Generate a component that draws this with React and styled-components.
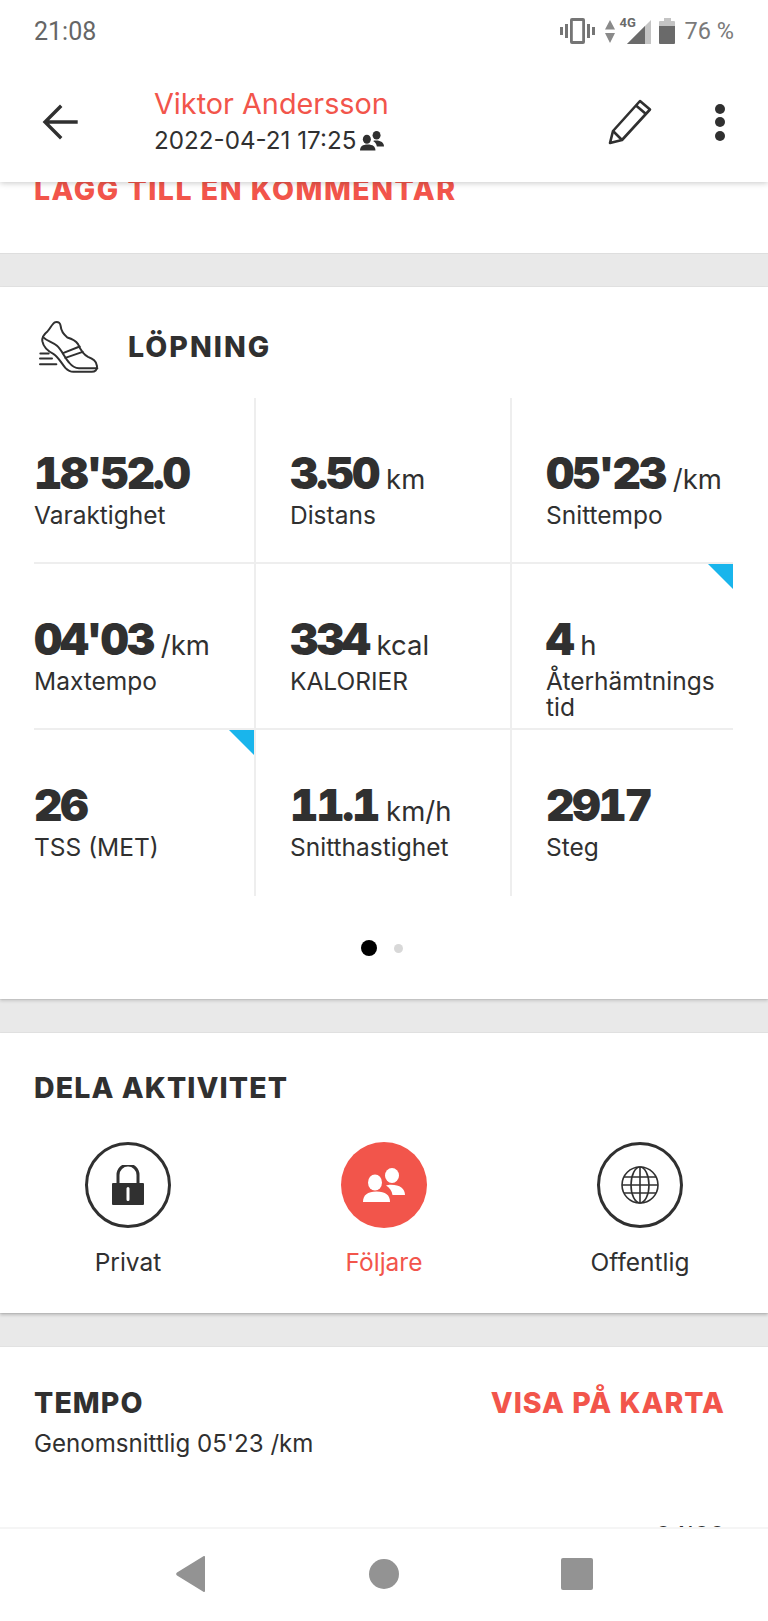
import styled, { createGlobalStyle, css } from "styled-components";

const RED = "#f2554b";
const INK = "#303030";
const LINE = "#eeeeee";

const GlobalStyle = createGlobalStyle`
  html, body { margin: 0; padding: 0; background: #fff; }
  * { box-sizing: border-box; }
`;

const metrics = [
  { value: "18'52.0", label: "Varaktighet" },
  { value: "3.50", unit: "km", label: "Distans" },
  { value: "05'23", unit: "/km", label: "Snittempo" },
  { value: "04'03", unit: "/km", label: "Maxtempo" },
  { value: "334", unit: "kcal", label: "KALORIER" },
  { value: "4", unit: "h", label: "Återhämtnings tid", flag: true },
  { value: "26", label: "TSS (MET)", flag: true },
  { value: "11.1", unit: "km/h", label: "Snitthastighet" },
  { value: "2917", label: "Steg" },
];

const PeopleIcon = ({ width = 24, color = INK }) => (
  <svg width={width} height={(width * 34) / 42} viewBox="0 0 42 34" fill={color}>
    <ellipse cx="12" cy="14.500" rx="7" ry="8" />
    <path d="M0 34c0-7 4.500-10.500 13.500-10.500S27 27 27 34z" />
    <ellipse cx="29" cy="7.500" rx="7" ry="7.500" />
    <path d="M23 17.500c1.200-.5 3-.8 5-.8 9 0 14 3.800 14 10.300H29.500c-.6-4-3-7.500-6.500-9.500z" />
  </svg>
);

const ShoeIcon = () => (
  <svg width="65" height="57" viewBox="110 55 195 170" fill="none" stroke={INK} strokeWidth="6" strokeLinejoin="round" strokeLinecap="round">
    <path d="M165 67c10-2 15 3 16 12 1 12 8 24 20 34 14 4 24 8 32 20 6 14 14 30 30 38 14 6 26 12 27 28 1 12-6 17-16 17h-55c-10 0-16-4-24-12-12-14-20-32-36-42-16-8-30-22-33-38-2-14 6-22 16-30 8-8 14-24 23-27z" />
    <path d="M128 112c12 12 28 14 42 26 14 12 22 34 36 50 8 10 16 17 30 17h55" />
    <path d="M188 160l50-20M195 174l52-18" />
    <path d="M120 161h25M119 176h36M119 193h49" />
  </svg>
);

const App = () => (
  <>
    <GlobalStyle />
    <Phone>
      <Top>
        <StatusBar>
          <Clock>21:08</Clock>
          <StatusIcons>
            <StatusGlyph>
              <svg width="35" height="26" viewBox="0 0 35 26" fill="#757575">
                <path d="M0 9h3v8H0zM5 6h3v14H5zM27 6h3v14h-3zM32 9h3v8h-3z" />
                <path fillRule="evenodd" d="M12 0h11a2 2 0 0 1 2 2v22a2 2 0 0 1-2 2H12a2 2 0 0 1-2-2V2a2 2 0 0 1 2-2zm.8 3v20h9.400V3z" />
              </svg>
            </StatusGlyph>
            <StatusGlyph $gap={10}>
              <svg width="10" height="23" viewBox="0 0 10 23" fill="#8a8a8a">
                <path d="M5 0l5 9.500H0zM0 13h10l-5 10z" />
              </svg>
            </StatusGlyph>
            <NetworkWrap>
              <NetworkLabel>4G</NetworkLabel>
              <svg width="24" height="24" viewBox="0 0 24 24">
                <path d="M0 24L24 0v24z" fill="#c4c4c4" />
                <path d="M0 24L18 6v18z" fill="#6a6a6a" />
              </svg>
            </NetworkWrap>
            <StatusGlyph $gap={8}>
              <svg width="16" height="26" viewBox="0 0 16 26">
                <path d="M5 0h7v3h3a1 1 0 0 1 1 1v4H0V4a1 1 0 0 1 1-1h4z" fill="#c4c4c4" />
                <path d="M0 8h16v17a1 1 0 0 1-1 1H1a1 1 0 0 1-1-1z" fill="#6a6a6a" />
              </svg>
            </StatusGlyph>
            <Battery>76 %</Battery>
          </StatusIcons>
        </StatusBar>
        <AppBar>
          <IconSlot>
            <svg width="38" height="36" viewBox="0 0 38 36" fill="none" stroke={INK} strokeWidth="3.400" strokeLinecap="square">
              <path d="M35 18H5M19 3L4 18l15 15" />
            </svg>
          </IconSlot>
          <TitleBlock>
            <UserName>Viktor Andersson</UserName>
            <DateRow>
              2022-04-21 17:25
              <PeopleIcon width={24} />
            </DateRow>
          </TitleBlock>
          <svg width="44" height="46" viewBox="0 0 44 46" fill="none" stroke={INK} strokeWidth="2.600" strokeLinejoin="round">
            <path d="M2 44l3-12L32 2l10 8.500L14 41z" />
            <path d="M28 6.500l10 8.500M5 32l9 9" />
          </svg>
          <Dots>
            <Dot />
            <Dot />
            <Dot />
          </Dots>
        </AppBar>
      </Top>

      <Content>
        <CommentCard>
          <RedHeading>LÄGG TILL EN KOMMENTAR</RedHeading>
        </CommentCard>
        <Gap />
        <ActivityCard>
          <ActivityHeader>
            <ShoeIcon />
            <ActivityTitle>LÖPNING</ActivityTitle>
          </ActivityHeader>
          <Grid>
            {metrics.map((m, i) => (
              <Cell key={m.label} $col={i % 3} $row={Math.floor(i / 3)}>
                {m.flag && <Flag />}
                <ValueRow>
                  <Value>{m.value}</Value>
                  {m.unit && <Unit>{m.unit}</Unit>}
                </ValueRow>
                <CellLabel>{m.label}</CellLabel>
              </Cell>
            ))}
          </Grid>
          <Pager>
            <PagerDot $active />
            <PagerDot />
          </Pager>
        </ActivityCard>
        <Gap />
        <ShareCard>
          <SectionTitle>DELA AKTIVITET</SectionTitle>
          <ShareRow>
            <ShareOption>
              <ShareCircle>
                <svg width="32" height="40" viewBox="0 0 32 40">
                  <path d="M6 20V10a10 10 0 0 1 20 0v10" fill="none" stroke={INK} strokeWidth="3" />
                  <path fillRule="evenodd" fill={INK} d="M1 18h30a1 1 0 0 1 1 1v20a1 1 0 0 1-1 1H1a1 1 0 0 1-1-1V19a1 1 0 0 1 1-1zm13.500 5.500v11a1.500 1.500 0 0 0 3 0v-11a1.500 1.500 0 0 0-3 0z" />
                </svg>
              </ShareCircle>
              <ShareLabel>Privat</ShareLabel>
            </ShareOption>
            <ShareOption>
              <ShareCircle $active>
                <PeopleIcon width={42} color="#fff" />
              </ShareCircle>
              <ShareLabel $active>Följare</ShareLabel>
            </ShareOption>
            <ShareOption>
              <ShareCircle>
                <svg width="40" height="40" viewBox="0 0 40 40" fill="none" stroke={INK} strokeWidth="1.600">
                  <circle cx="20" cy="20" r="18" />
                  <ellipse cx="20" cy="20" rx="9" ry="18" />
                  <path d="M20 2v36M2 20h36M4 12h32M4 28h32" />
                </svg>
              </ShareCircle>
              <ShareLabel>Offentlig</ShareLabel>
            </ShareOption>
          </ShareRow>
        </ShareCard>
        <Gap />
        <TempoCard>
          <TempoHead>
            <SectionTitle>TEMPO</SectionTitle>
            <MapLink>VISA PÅ KARTA</MapLink>
          </TempoHead>
          <TempoSub>Genomsnittlig 05'23 /km</TempoSub>
          <AxisLabel>04'00</AxisLabel>
        </TempoCard>
      </Content>

      <NavBar>
        <svg width="32" height="36" viewBox="0 0 32 36" fill="#939393">
          <path d="M30 1v34a1 1 0 0 1-1.600 .8L2 19.500a2 2 0 0 1 0-3L28.400 .2A1 1 0 0 1 30 1z" />
        </svg>
        <HomeButton />
        <RecentButton />
      </NavBar>
    </Phone>
  </>
);

const heading = css`
  margin: 0;
  font-family: Inter, sans-serif;
  font-size: 28.500px;
  line-height: 34px;
  font-weight: 800;
  letter-spacing: 1.500px;
`;

const Phone = styled.div`
  width: 768px;
  height: 1621px;
  display: flex;
  flex-direction: column;
  overflow: hidden;
  background: #fff;
  font-family: Inter, "Liberation Sans", sans-serif;
  color: ${INK};
`;

const Top = styled.header`
  position: relative;
  z-index: 2;
  flex: 0 0 182px;
  background: #fff;
  box-shadow: 0 1px 6px rgba(0, 0, 0, 0.22);
`;

const StatusBar = styled.div`
  height: 62px;
  padding: 0 34px;
  display: flex;
  align-items: center;
  justify-content: space-between;
`;

const Clock = styled.span`
  font-family: Roboto, sans-serif;
  font-size: 25px;
  color: #666;
`;

const StatusIcons = styled.div`
  display: flex;
  align-items: center;
`;

const StatusGlyph = styled.span`
  display: flex;
  margin-left: ${(p) => p.$gap || 0}px;
`;

const NetworkWrap = styled.div`
  position: relative;
  margin-left: 5px;
  width: 31px;
  height: 26px;
  display: flex;
  justify-content: flex-end;
  align-items: flex-end;
`;

const NetworkLabel = styled.span`
  position: absolute;
  left: 0;
  top: -3px;
  font-family: Roboto, sans-serif;
  font-size: 13px;
  font-weight: 700;
  color: #6a6a6a;
`;

const Battery = styled.span`
  margin-left: 10px;
  font-family: Roboto, sans-serif;
  font-size: 23.500px;
  color: #7a7a7a;
`;

const AppBar = styled.div`
  height: 120px;
  padding: 0 43px 0 41px;
  display: flex;
  align-items: center;
`;

const IconSlot = styled.div`
  width: 113px;
  display: flex;
  align-items: center;
`;

const TitleBlock = styled.div`
  flex: 1;
  display: flex;
  flex-direction: column;
  gap: 5px;
  margin-top: -1px;
`;

const UserName = styled.div`
  font-size: 28.800px;
  color: ${RED};
  line-height: 34px;
`;

const DateRow = styled.div`
  display: flex;
  align-items: center;
  gap: 4px;
  font-size: 24.200px;
  line-height: 30px;
`;

const Dots = styled.div`
  margin-left: 63px;
  display: flex;
  flex-direction: column;
  gap: 3.500px;
`;

const Dot = styled.span`
  width: 10px;
  height: 10px;
  border-radius: 50%;
  background: ${INK};
`;

const Content = styled.main`
  flex: 1;
  min-height: 0;
  overflow: hidden;
  display: flex;
  flex-direction: column;
`;

const Gap = styled.div`
  flex: 0 0 34px;
  background: #e9e9e9;
  border-top: 1px solid #dedede;
  border-bottom: 1px solid #e2e2e2;
`;

const CommentCard = styled.section`
  flex: 0 0 71px;
  padding: 0 34px;
  background: #fff;
`;

const RedHeading = styled.div`
  ${heading}
  margin-top: -9px;
  color: ${RED};
`;

const ActivityCard = styled.section`
  flex: 0 0 712px;
  background: #fff;
  box-shadow: 0 2px 3px rgba(0, 0, 0, 0.15);
  position: relative;
`;

const ActivityHeader = styled.div`
  height: 111px;
  padding: 8px 34px 0 37px;
  display: flex;
  align-items: center;
  gap: 26px;
`;

const ActivityTitle = styled.h2`
  ${heading}
  letter-spacing: 2px;
`;

const Grid = styled.div`
  margin-left: 34px;
  width: 699px;
  display: grid;
  grid-template-columns: 220px 256px 223px;
  grid-auto-rows: 166px;
`;

const Cell = styled.div`
  position: relative;
  padding: 53px 0 0 ${(p) => (p.$col === 0 ? 0 : 34)}px;
  border-left: ${(p) => (p.$col === 0 ? "none" : `2px solid ${LINE}`)};
  border-bottom: ${(p) => (p.$row === 2 ? "none" : `2px solid ${LINE}`)};
`;

const Flag = styled.span`
  position: absolute;
  top: 0;
  right: 0;
  width: 25px;
  height: 25px;
  background: #19b5ec;
  clip-path: polygon(0 0, 100% 0, 100% 100%);
`;

const ValueRow = styled.div`
  height: 44px;
  display: flex;
  align-items: baseline;
  gap: 8px;
  line-height: 44px;
`;

const Value = styled.span`
  font-family: Inter, sans-serif;
  font-size: 44px;
  font-weight: 900;
  font-variant-numeric: tabular-nums;
  letter-spacing: -2.200px;
`;

const Unit = styled.span`
  font-size: 27.500px;
`;

const CellLabel = styled.div`
  width: 180px;
  margin-top: 7px;
  font-size: 24.500px;
  line-height: 26px;
`;

const Pager = styled.div`
  margin-top: 44px;
  display: flex;
  justify-content: center;
  align-items: center;
  gap: 17px;
  padding-right: 4px;
`;

const PagerDot = styled.span`
  width: ${(p) => (p.$active ? 16 : 9)}px;
  height: ${(p) => (p.$active ? 16 : 9)}px;
  border-radius: 50%;
  background: ${(p) => (p.$active ? "#000" : "#d8d8d8")};
`;

const ShareCard = styled.section`
  flex: 0 0 280px;
  padding: 38px 34px 0;
  background: #fff;
  box-shadow: 0 2px 3px rgba(0, 0, 0, 0.2);
  position: relative;
`;

const SectionTitle = styled.h3`
  ${heading}
  letter-spacing: 1.100px;
`;

const ShareRow = styled.div`
  margin-top: 37px;
  margin-left: -34px;
  margin-right: -34px;
  display: grid;
  grid-template-columns: repeat(3, 256px);
`;

const ShareOption = styled.div`
  display: flex;
  flex-direction: column;
  align-items: center;
  gap: 19px;
`;

const ShareCircle = styled.div`
  width: 86px;
  height: 86px;
  border-radius: 50%;
  display: flex;
  align-items: center;
  justify-content: center;
  background: ${(p) => (p.$active ? RED : "#fff")};
  border: ${(p) => (p.$active ? "none" : `3px solid ${INK}`)};
`;

const ShareLabel = styled.span`
  font-size: 24.500px;
  line-height: 30px;
  color: ${(p) => (p.$active ? RED : INK)};
`;

const TempoCard = styled.section`
  flex: 1;
  position: relative;
  padding: 39px 43px 0 34px;
  background: #fff;
  overflow: hidden;
`;

const TempoHead = styled.div`
  display: flex;
  justify-content: space-between;
  align-items: center;
`;

const MapLink = styled.span`
  ${heading}
  letter-spacing: 1px;
  color: ${RED};
`;

const TempoSub = styled.div`
  margin-top: 9px;
  font-size: 24.100px;
  line-height: 30px;
`;

const AxisLabel = styled.div`
  margin-top: 61px;
  text-align: right;
  font-size: 24.500px;
  line-height: 30px;
`;

const NavBar = styled.nav`
  position: relative;
  z-index: 2;
  flex: 0 0 94px;
  background: #fff;
  border-top: 2px solid #f5f5f5;
  display: grid;
  grid-template-columns: 32px 30px 32px;
  justify-content: center;
  column-gap: 162px;
  align-items: center;
  padding-bottom: 2px;
`;

const HomeButton = styled.span`
  width: 30px;
  height: 30px;
  border-radius: 50%;
  background: #939393;
`;

const RecentButton = styled.span`
  width: 32px;
  height: 32px;
  border-radius: 2px;
  background: #939393;
`;

export default App;
